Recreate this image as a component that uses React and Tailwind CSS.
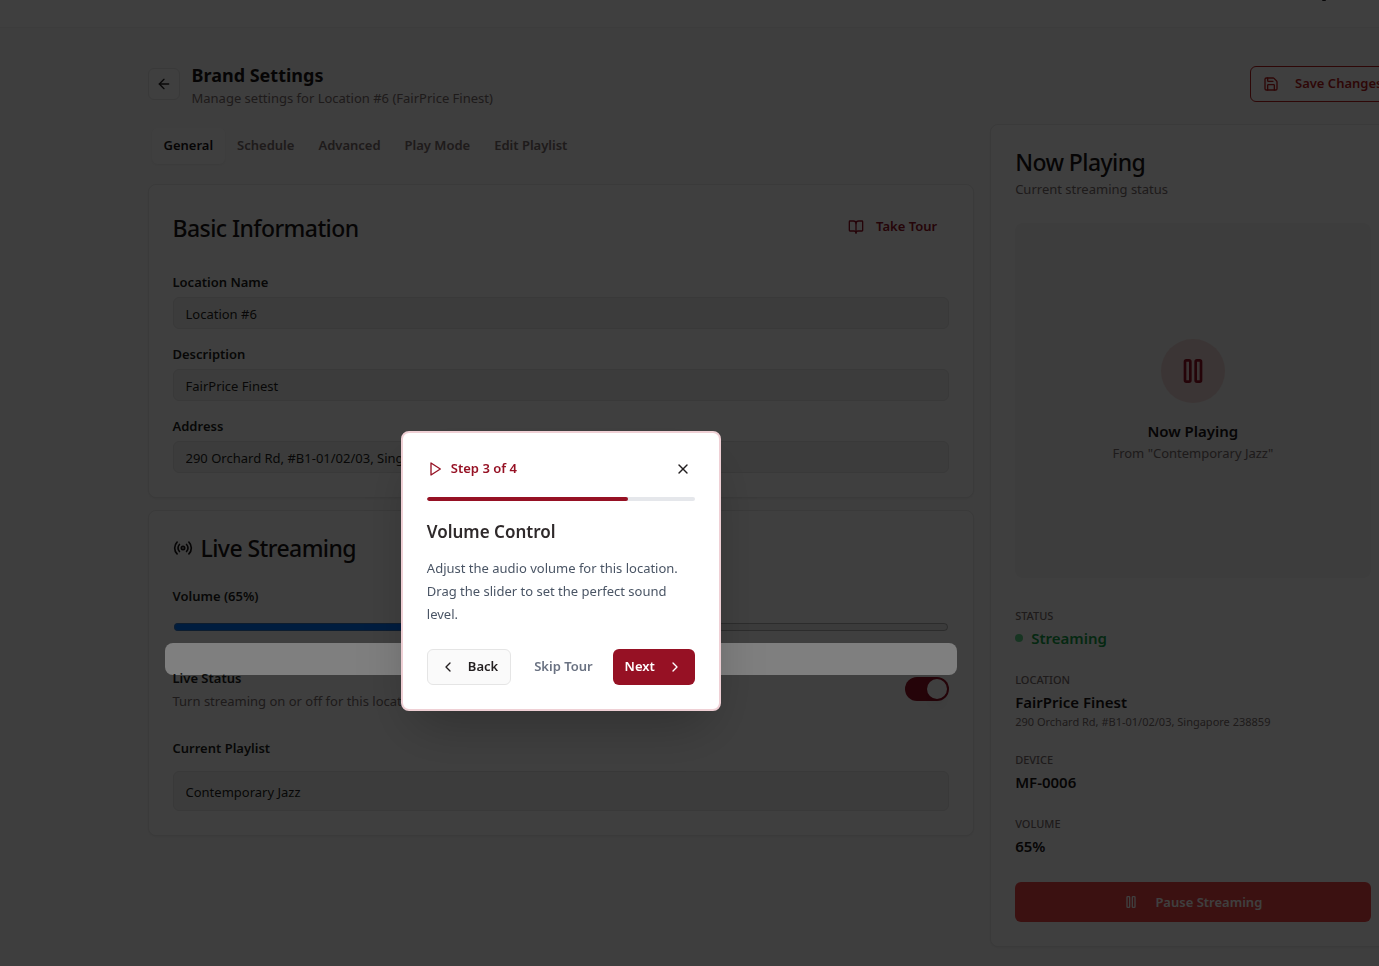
import { ArrowLeft, Save, BookOpen, Radio, X, ChevronLeft, ChevronRight } from "lucide-react";

const card = "rounded-lg border border-[#e8e8e8] bg-white p-6 shadow-xs";
const heading = "pt-px text-[23px] leading-6 font-medium tracking-tight text-[#1a1617]";
const label = "block text-[13px] leading-[18px] font-semibold text-[#231f20]";
const field =
  "block w-full rounded-md border border-[#e5e5e5] bg-[#f3f3f3] px-3 pt-px text-[13px] text-[#231f20]";

const tabs = ["General", "Schedule", "Advanced", "Play Mode", "Edit Playlist"];

const fields = [
  { id: "name", title: "Location Name", value: "Location #6" },
  { id: "description", title: "Description", value: "FairPrice Finest" },
  { id: "address", title: "Address", value: "290 Orchard Rd, #B1-01/02/03, Singapore 238859" },
];

function Icon({ size, children }) {
  return (
    <svg
      width={size}
      height={size}
      viewBox="0 0 24 24"
      fill="none"
      stroke="currentColor"
      strokeWidth="2"
      strokeLinecap="round"
      strokeLinejoin="round"
      aria-hidden="true"
    >
      {children}
    </svg>
  );
}

function Pause({ size }) {
  return (
    <Icon size={size}>
      <rect x="14" y="4" width="4" height="16" rx="1" />
      <rect x="6" y="4" width="4" height="16" rx="1" />
    </Icon>
  );
}

function Play({ size }) {
  return (
    <Icon size={size}>
      <polygon points="6 3 20 12 6 21 6 3" />
    </Icon>
  );
}

function Detail({ title, children }) {
  return (
    <div>
      <dt className="text-[11px] leading-5 font-medium text-[#786c6c] uppercase">{title}</dt>
      <dd className="text-[15px] leading-6 font-semibold text-[#1a1617]">{children}</dd>
    </div>
  );
}

function BasicInformation() {
  return (
    <section className={card}>
      <div className="mb-7 flex items-center justify-between">
        <h2 className={heading}>Basic Information</h2>
        <button className="flex h-9 items-center gap-3 px-3 text-[13px] font-semibold text-[#961124]">
          <BookOpen size={16} />
          Take Tour
        </button>
      </div>
      <div className="flex flex-col gap-4">
        {fields.map((f) => (
          <div key={f.id} className="flex flex-col gap-1.5">
            <label htmlFor={f.id} className={label}>
              {f.title}
            </label>
            <input id={f.id} defaultValue={f.value} readOnly className={`${field} h-8`} />
          </div>
        ))}
      </div>
    </section>
  );
}

function TourDialog() {
  return (
    <div
      role="dialog"
      aria-labelledby="tour-title"
      className="absolute top-[-80px] left-1/2 z-50 w-80 -translate-x-1/2 rounded-lg border-2 border-[#efd0d5] bg-white p-6 shadow-2xl"
    >
      <div className="flex items-center justify-between">
        <div className="flex items-center gap-2 text-[13px] font-semibold text-[#961124]">
          <Play size={16} />
          Step 3 of 4
        </div>
        <button aria-label="Close" className="flex size-6 items-center justify-center text-[#231f20]">
          <X size={16} />
        </button>
      </div>
      <div className="mt-4 h-1 overflow-hidden rounded-full bg-gray-200">
        <div className="h-full w-3/4 rounded-full bg-[#961124]" />
      </div>
      <h3 id="tour-title" className="mt-4 text-[17px] leading-[30px] font-semibold text-[#2e292a]">
        Volume Control
      </h3>
      <p className="mt-2.5 text-[13px] leading-[23px] text-gray-600">
        Adjust the audio volume for this location. Drag the slider to set the perfect sound level.
      </p>
      <div className="mt-[23px] flex items-center justify-between text-[13px] font-semibold">
        <button className="flex h-9 items-center gap-3 rounded-md border border-[#e5e5e5] bg-[#fafafa] px-3 text-[#231f20]">
          <ChevronLeft size={16} />
          Back
        </button>
        <div className="flex items-center gap-2">
          <button className="h-9 px-3 text-gray-500">Skip Tour</button>
          <button className="flex h-9 items-center gap-3 rounded-md bg-[#961124] px-3 text-white">
            Next
            <ChevronRight size={16} />
          </button>
        </div>
      </div>
    </div>
  );
}

function LiveStreaming() {
  return (
    <section className={`${card} relative`}>
      <h2 className={`${heading} flex items-center gap-2`}>
        <Radio size={20} />
        Live Streaming
      </h2>
      <div className="mt-[27px]">
        <label htmlFor="volume" className={label}>
          Volume (65%)
        </label>
        <input id="volume" type="range" defaultValue="65" className="mt-[18px] block h-2 w-full" />
      </div>
      <div className="mt-[35px] flex items-center justify-between">
        <div>
          <div id="live-label" className="text-[13px] leading-6 font-semibold text-[#231f20]">
            Live Status
          </div>
          <p className="text-[13px] leading-[22px] text-[#786c6c]">Turn streaming on or off for this location</p>
        </div>
        <button
          role="switch"
          aria-checked="true"
          aria-labelledby="live-label"
          className="flex h-6 w-11 items-center justify-end rounded-full bg-[#961124] p-0.5"
        >
          <span className="size-5 rounded-full bg-white shadow-lg" />
        </button>
      </div>
      <div className="mt-[27px]">
        <label htmlFor="playlist" className={label}>
          Current Playlist
        </label>
        <input id="playlist" defaultValue="Contemporary Jazz" readOnly className={`${field} mt-3.5 h-10`} />
      </div>
      <div className="pointer-events-none absolute inset-x-4 top-[132px] z-40 h-8 rounded-lg shadow-[0_0_0_9999px_rgba(0,0,0,0.5)]" />
      <TourDialog />
    </section>
  );
}

function NowPlaying() {
  return (
    <aside className={card}>
      <h2 className={heading}>Now Playing</h2>
      <p className="mt-[5px] text-[13px] leading-5 text-[#786c6c]">Current streaming status</p>
      <div className="mt-6 flex aspect-square flex-col items-center justify-center rounded-lg bg-[#f4f4f4]">
        <div className="mb-4 flex size-16 items-center justify-center rounded-full bg-[#efd6d4] text-[#961124]">
          <Pause size={32} />
        </div>
        <div className="text-[15px] leading-6 font-semibold text-[#1a1617]">Now Playing</div>
        <div className="text-[13px] leading-5 text-[#786c6c]">From "Contemporary Jazz"</div>
      </div>
      <dl className="mt-7 flex flex-col gap-5">
        <Detail title="Status">
          <span className="flex items-center gap-2 text-[#16a34a]">
            <span className="size-2 rounded-full bg-[#5fd48a]" />
            Streaming
          </span>
        </Detail>
        <Detail title="Location">
          FairPrice Finest
          <span className="block text-[11px] leading-4 font-normal text-[#786c6c]">
            290 Orchard Rd, #B1-01/02/03, Singapore 238859
          </span>
        </Detail>
        <Detail title="Device">MF-0006</Detail>
        <Detail title="Volume">65%</Detail>
      </dl>
      <button className="mt-6 flex h-10 w-full items-center justify-center gap-4 rounded-md bg-[#ef4444] text-[13px] font-semibold text-white">
        <Pause size={16} />
        Pause Streaming
      </button>
    </aside>
  );
}

export default function App() {
  return (
    <div className="min-h-screen overflow-hidden bg-[#fafafa] font-['Noto_Sans',sans-serif]">
      <div className="min-w-[1543px]">
        <header className="h-7 border-b border-[#f3f3f3] bg-white">
          <div className="mx-auto flex max-w-7xl justify-end px-4">
            <span className="mr-[70px] h-px w-1 rounded-b bg-[#231f20]" />
          </div>
        </header>
        <main className="mx-auto max-w-7xl px-4 py-8">
          <div className="flex items-center justify-between">
            <div className="flex items-center gap-3">
              <button
                aria-label="Back"
                className="flex size-8 items-center justify-center rounded-md border border-[#e5e5e5] bg-[#fcfcfc] text-[#231f20]"
              >
                <ArrowLeft size={16} />
              </button>
              <div>
                <h1 className="pt-0.5 text-[18px] leading-[26px] font-bold text-[#1a1617]">Brand Settings</h1>
                <p className="text-[13px] leading-5 text-[#786c6c]">
                  Manage settings for Location #6 (FairPrice Finest)
                </p>
              </div>
            </div>
            <button className="flex h-9 items-center gap-4 rounded-md border border-[#b91c1c] bg-white px-3 text-[13px] font-semibold text-[#b91c1c]">
              <Save size={16} />
              Save Changes
            </button>
          </div>
          <div className="mt-4 grid grid-cols-3 items-start gap-4">
            <div className="col-span-2">
              <div role="tablist" className="inline-flex h-11 items-center rounded-lg bg-[#f8f8f8] p-1">
                {tabs.map((t, i) => (
                  <button
                    key={t}
                    role="tab"
                    aria-selected={i === 0}
                    className={
                      i === 0
                        ? "h-9 rounded-md bg-white px-3 text-[13px] font-semibold text-[#1a1617] shadow-xs"
                        : "h-9 px-3 text-[13px] font-semibold text-[#786c6c]"
                    }
                  >
                    {t}
                  </button>
                ))}
              </div>
              <div className="mt-4 flex flex-col gap-3">
                <BasicInformation />
                <LiveStreaming />
              </div>
            </div>
            <NowPlaying />
          </div>
        </main>
      </div>
      <div className="fixed inset-0 z-30 bg-black/50" />
    </div>
  );
}
